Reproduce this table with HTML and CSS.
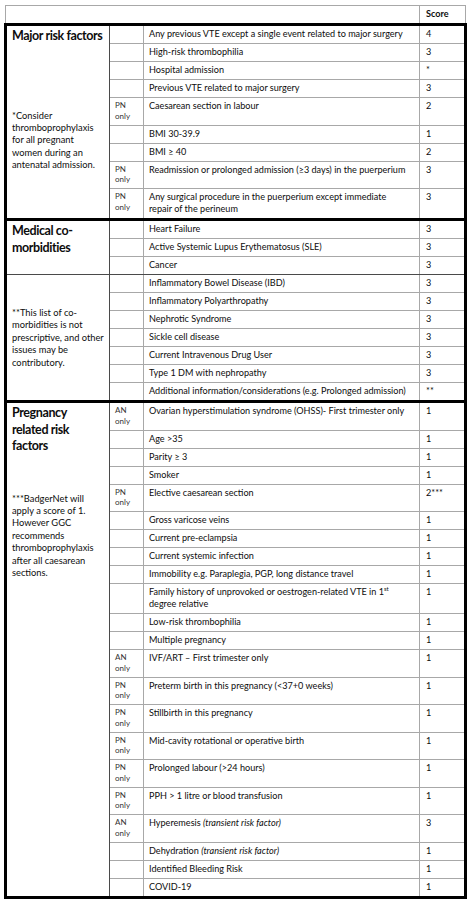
FILE: index.html
```html
<!DOCTYPE html>
<html lang="en">
<head>
<meta charset="utf-8">
<title>VTE risk assessment</title>
<link rel="stylesheet" href="styles.css">
</head>
<body>
<table class="risk">
  <colgroup>
    <col class="c1"><col class="c2"><col class="c3"><col class="c4">
  </colgroup>
  <thead>
    <tr class="head"><td colspan="3"></td><td class="score-h">Score</td></tr>
  </thead>
  <tbody class="sec">
    <tr><td class="cat" rowspan="9"><div class="cat-title">Major risk factors</div><div class="note note-major">*Consider<br>thromboprophylaxis<br>for all pregnant<br>women during an<br>antenatal admission.</div></td><td class="tag"></td><td>Any previous VTE except a single event related to major surgery</td><td class="sc">4</td></tr>
    <tr><td class="tag"></td><td>High-risk thrombophilia</td><td class="sc">3</td></tr>
    <tr><td class="tag"></td><td>Hospital admission</td><td class="sc">*</td></tr>
    <tr><td class="tag"></td><td>Previous VTE related to major surgery</td><td class="sc">3</td></tr>
    <tr><td class="tag">PN<br>only</td><td>Caesarean section in labour</td><td class="sc">2</td></tr>
    <tr><td class="tag"></td><td>BMI 30-39.9</td><td class="sc">1</td></tr>
    <tr><td class="tag"></td><td>BMI ≥ 40</td><td class="sc">2</td></tr>
    <tr><td class="tag">PN<br>only</td><td>Readmission or prolonged admission (≥3 days) in the puerperium</td><td class="sc">3</td></tr>
    <tr><td class="tag">PN<br>only</td><td>Any surgical procedure in the puerperium except immediate<br>repair of the perineum</td><td class="sc">3</td></tr>
  </tbody>
  <tbody class="sec">
    <tr><td class="cat split" rowspan="3"><div class="cat-title">Medical co-<br>morbidities</div></td><td class="tag"></td><td>Heart Failure</td><td class="sc">3</td></tr>
    <tr><td class="tag"></td><td>Active Systemic Lupus Erythematosus (SLE)</td><td class="sc">3</td></tr>
    <tr class="split"><td class="tag"></td><td>Cancer</td><td class="sc">3</td></tr>
    <tr><td class="cat" rowspan="7"><div class="note note-med">**This list of co-<br>morbidities is not<br>prescriptive, and other<br>issues may be<br>contributory.</div></td><td class="tag"></td><td>Inflammatory Bowel Disease (IBD)</td><td class="sc">3</td></tr>
    <tr><td class="tag"></td><td>Inflammatory Polyarthropathy</td><td class="sc">3</td></tr>
    <tr><td class="tag"></td><td>Nephrotic Syndrome</td><td class="sc">3</td></tr>
    <tr><td class="tag"></td><td>Sickle cell disease</td><td class="sc">3</td></tr>
    <tr><td class="tag"></td><td>Current Intravenous Drug User</td><td class="sc">3</td></tr>
    <tr><td class="tag"></td><td>Type 1 DM with nephropathy</td><td class="sc">3</td></tr>
    <tr><td class="tag"></td><td>Additional information/considerations (e.g. Prolonged admission)</td><td class="sc">**</td></tr>
  </tbody>
  <tbody class="sec">
    <tr><td class="cat" rowspan="22"><div class="cat-title">Pregnancy<br>related risk<br>factors</div><div class="note note-preg">***BadgerNet will<br>apply a score of 1.<br>However GGC<br>recommends<br>thromboprophylaxis<br>after all caesarean<br>sections.</div></td><td class="tag">AN<br>only</td><td>Ovarian hyperstimulation syndrome (OHSS)- First trimester only</td><td class="sc">1</td></tr>
    <tr><td class="tag"></td><td>Age &gt;35</td><td class="sc">1</td></tr>
    <tr><td class="tag"></td><td>Parity ≥ 3</td><td class="sc">1</td></tr>
    <tr><td class="tag"></td><td>Smoker</td><td class="sc">1</td></tr>
    <tr><td class="tag">PN<br>only</td><td>Elective caesarean section</td><td class="sc">2***</td></tr>
    <tr><td class="tag"></td><td>Gross varicose veins</td><td class="sc">1</td></tr>
    <tr><td class="tag"></td><td>Current pre-eclampsia</td><td class="sc">1</td></tr>
    <tr><td class="tag"></td><td>Current systemic infection</td><td class="sc">1</td></tr>
    <tr><td class="tag"></td><td>Immobility e.g. Paraplegia, PGP, long distance travel</td><td class="sc">1</td></tr>
    <tr><td class="tag"></td><td>Family history of unprovoked or oestrogen-related VTE in 1<sup>st</sup><br>degree relative</td><td class="sc">1</td></tr>
    <tr><td class="tag"></td><td>Low-risk thrombophilia</td><td class="sc">1</td></tr>
    <tr><td class="tag"></td><td>Multiple pregnancy</td><td class="sc">1</td></tr>
    <tr><td class="tag">AN<br>only</td><td>IVF/ART – First trimester only</td><td class="sc">1</td></tr>
    <tr><td class="tag">PN<br>only</td><td>Preterm birth in this pregnancy (&lt;37+0 weeks)</td><td class="sc">1</td></tr>
    <tr><td class="tag">PN<br>only</td><td>Stillbirth in this pregnancy</td><td class="sc">1</td></tr>
    <tr><td class="tag">PN<br>only</td><td>Mid-cavity rotational or operative birth</td><td class="sc">1</td></tr>
    <tr><td class="tag">PN<br>only</td><td>Prolonged labour (&gt;24 hours)</td><td class="sc">1</td></tr>
    <tr><td class="tag">PN<br>only</td><td>PPH &gt; 1 litre or blood transfusion</td><td class="sc">1</td></tr>
    <tr><td class="tag">AN<br>only</td><td>Hyperemesis <em>(transient risk factor)</em></td><td class="sc">3</td></tr>
    <tr><td class="tag"></td><td>Dehydration <em>(transient risk factor)</em></td><td class="sc">1</td></tr>
    <tr><td class="tag"></td><td>Identified Bleeding Risk</td><td class="sc">1</td></tr>
    <tr><td class="tag"></td><td>COVID-19</td><td class="sc">1</td></tr>
  </tbody>
</table>
</body>
</html>
```
FILE: styles.css
```css
html, body {
  margin: 0;
  padding: 0;
  background: #ffffff;
}

body {
  font-family: Lato, "Liberation Sans", sans-serif;
  color: #0d0d0d;
}

.risk {
  border-collapse: collapse;
  table-layout: fixed;
  width: 461px;
  margin: 5px 0 0 4px;
}

.c1 { width: 104px; }
.c2 { width: 34px; }
.c3 { width: 276px; }
.c4 { width: 46px; }

.risk td {
  border: 1px solid #a8a8a8;
  padding: 2px 4px 3px 5px;
  font-size: 9.1px;
  line-height: 12px;
  vertical-align: top;
  text-align: left;
}

.risk .head td {
  height: 12px;
}

.risk .score-h {
  font-weight: bold;
  padding-left: 6px;
}

.sec {
  border: 3px solid #000000;
}

.risk td.cat {
  border-right: 1px solid #4a4a4a;
  padding: 2px 1px 3px 5px;
}

.risk td.split,
.risk tr.split td {
  border-bottom: 1px solid #4a4a4a;
}

.risk td.tag {
  font-size: 8px;
  line-height: 10.75px;
  color: #333333;
}

.risk td.sc {
  padding-left: 6px;
}

.cat-title {
  font-weight: bold;
  font-size: 12.5px;
  line-height: 16.5px;
  letter-spacing: -0.4px;
  white-space: nowrap;
}

.note {
  font-size: 9.3px;
  line-height: 12.4px;
}

.note-major { margin-top: 65px; }
.note-med { margin-top: 30px; }
.note-preg { margin-top: 38px; }

sup {
  font-size: 6px;
  line-height: 0;
}

em {
  font-style: italic;
}
```
